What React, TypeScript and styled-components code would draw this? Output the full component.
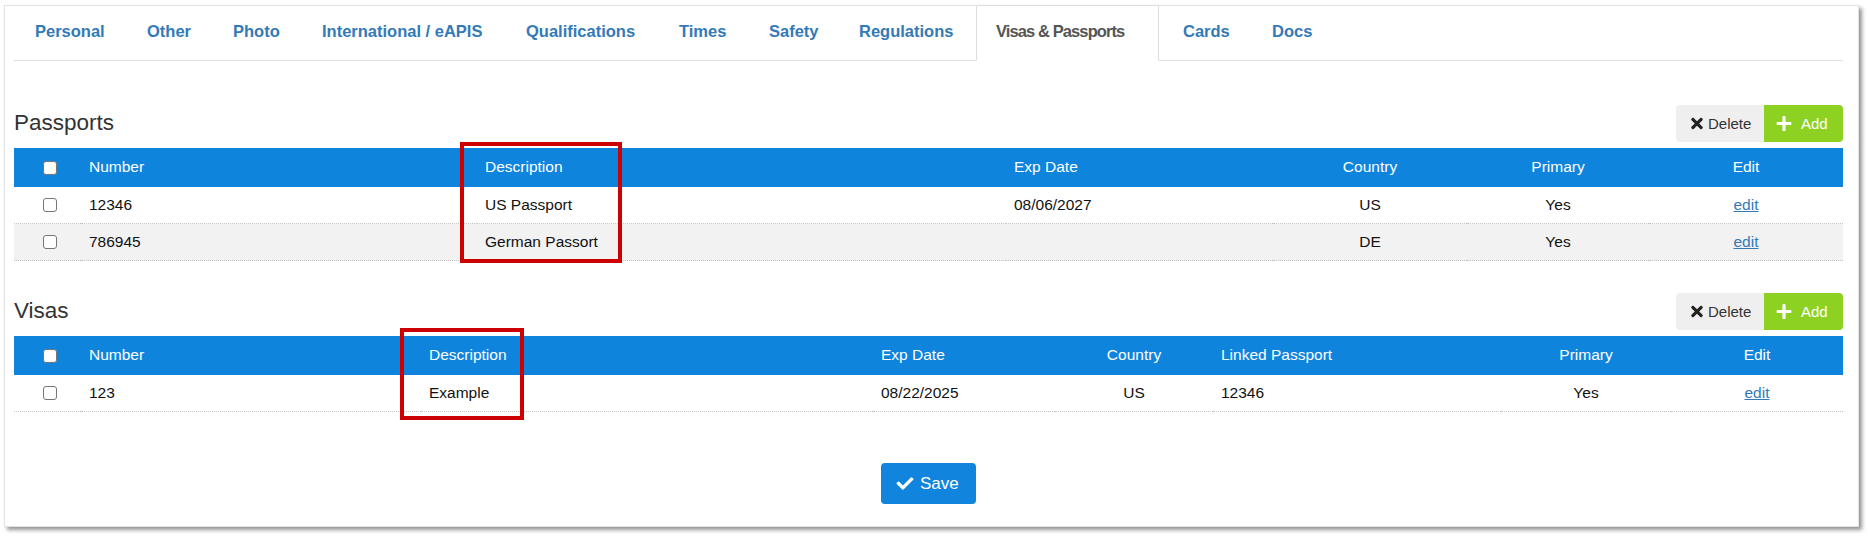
import React from 'react'
import styled, { createGlobalStyle } from 'styled-components'
import { FaTimes, FaPlus, FaCheck } from 'react-icons/fa'

const GlobalStyle = createGlobalStyle`
  html, body {
    margin: 0;
    padding: 0;
    background: #ffffff;
  }
  body {
    font-family: 'Liberation Sans', Arial, Helvetica, sans-serif;
    color: #111;
  }
`

interface Column {
  label: string
  width: number
  align?: 'left' | 'center'
}

interface TabItem {
  label: string
  width: number
  active?: boolean
}

const tabs: TabItem[] = [
  { label: 'Personal', width: 109 },
  { label: 'Other', width: 83 },
  { label: 'Photo', width: 86 },
  { label: 'International / eAPIS', width: 201 },
  { label: 'Qualifications', width: 150 },
  { label: 'Times', width: 87 },
  { label: 'Safety', width: 87 },
  { label: 'Regulations', width: 135 },
  { label: 'Visas & Passports', width: 183, active: true },
  { label: 'Cards', width: 86 },
  { label: 'Docs', width: 80 },
]

const passportColumns: Column[] = [
  { label: 'Number', width: 396 },
  { label: 'Description', width: 529 },
  { label: 'Exp Date', width: 267 },
  { label: 'Country', width: 194, align: 'center' },
  { label: 'Primary', width: 182, align: 'center' },
  { label: 'Edit', width: 194, align: 'center' },
]

const passportRows = [
  ['12346', 'US Passport', '08/06/2027', 'US', 'Yes'],
  ['786945', 'German Passort', '', 'DE', 'Yes'],
]

const visaColumns: Column[] = [
  { label: 'Number', width: 340 },
  { label: 'Description', width: 452 },
  { label: 'Exp Date', width: 182 },
  { label: 'Country', width: 158, align: 'center' },
  { label: 'Linked Passport', width: 288 },
  { label: 'Primary', width: 170, align: 'center' },
  { label: 'Edit', width: 172, align: 'center' },
]

const visaRows = [['123', 'Example', '08/22/2025', 'US', '12346', 'Yes']]

const Page = styled.div`
  position: relative;
  padding: 5px 0 9px 4px;
`

const Panel = styled.div`
  box-sizing: border-box;
  width: 1855px;
  height: 522px;
  background: #fff;
  border: 1px solid #e2e2e2;
  box-shadow: 3px 3px 4px rgba(0, 0, 0, 0.42);
  padding: 0 15px 0 9px;
`

const Tabs = styled.ul`
  display: flex;
  list-style: none;
  margin: -1px 0 0;
  padding: 0;
  border-bottom: 1px solid #dddddd;
`

const Tab = styled.li<{ $width: number; $active?: boolean }>`
  box-sizing: border-box;
  width: ${p => p.$width}px;
  height: 56px;
  margin-right: 3px;
  margin-bottom: -1px;
  padding: 0 0 3px 20px;
  display: flex;
  align-items: center;
  white-space: nowrap;
  font-size: 16.5px;
  font-weight: 700;
  color: ${p => (p.$active ? '#555555' : '#337ab7')};
  background: ${p => (p.$active ? '#ffffff' : 'transparent')};
  border: 1px solid ${p => (p.$active ? '#dddddd' : 'transparent')};
  border-bottom-color: ${p => (p.$active ? '#ffffff' : 'transparent')};
  border-radius: 2px 2px 0 0;
  ${p => p.$active && 'padding-left: 19px; letter-spacing: -0.9px;'}
`

const SectionHead = styled.div<{ $top: number }>`
  display: flex;
  align-items: center;
  justify-content: space-between;
  height: 37px;
  margin-top: ${p => p.$top}px;
  margin-bottom: 6px;
`

const Heading = styled.h2`
  margin: 0;
  font-size: 22.5px;
  font-weight: 400;
  color: #333;
  padding-bottom: 2px;
`

const ButtonGroup = styled.div`
  display: flex;
  height: 37px;
`

const ActionButton = styled.button<{ $variant: 'delete' | 'add' }>`
  display: flex;
  align-items: center;
  box-sizing: border-box;
  height: 37px;
  margin: 0;
  border: none;
  font-family: inherit;
  font-size: 15px;
  cursor: pointer;
  background: ${p => (p.$variant === 'delete' ? '#efefef' : '#8dd123')};
  color: ${p => (p.$variant === 'delete' ? '#333' : '#fff')};
  width: ${p => (p.$variant === 'delete' ? 88 : 79)}px;
  padding: ${p => (p.$variant === 'delete' ? '0 0 0 14px' : '0 0 0 12px')};
  gap: ${p => (p.$variant === 'delete' ? 4 : 9)}px;
  border-radius: ${p => (p.$variant === 'delete' ? '4px 0 0 4px' : '0 4px 4px 0')};

  svg {
    flex-shrink: 0;
    width: ${p => (p.$variant === 'delete' ? 14 : 16)}px;
    height: 17px;
    color: ${p => (p.$variant === 'delete' ? '#222' : '#fff')};
  }
`

const Table = styled.table`
  width: 100%;
  border-collapse: collapse;
  table-layout: fixed;
  font-size: 15.5px;
`

const HeadCell = styled.th<{ $align?: 'left' | 'center' }>`
  height: 38px;
  padding: 0 0 1px 8px;
  background: #0e84dd;
  color: #fff;
  font-weight: 400;
  text-align: ${p => p.$align || 'left'};
  ${p => p.$align === 'center' && 'padding-left: 0;'}
`

const Row = styled.tr<{ $striped?: boolean }>`
  background: ${p => (p.$striped ? '#f2f2f2' : '#ffffff')};
  border-bottom: 1px dotted #c4c4c4;
`

const Cell = styled.td<{ $align?: 'left' | 'center' }>`
  height: 36px;
  padding: 0 0 0 8px;
  color: #111;
  text-align: ${p => p.$align || 'left'};
  ${p => p.$align === 'center' && 'padding-left: 0;'}
`

const CheckCell = styled.td`
  padding: 0 0 0 29px;
  line-height: 0;
`

const CheckHead = styled.th`
  padding: 0 0 0 29px;
  background: #0e84dd;
  line-height: 0;
`

const Check = styled.input.attrs({ type: 'checkbox' })`
  appearance: none;
  display: block;
  width: 14px;
  height: 14px;
  margin: 0;
  border: 1px solid #767676;
  border-radius: 3px;
  background: #fff;
`

const EditLink = styled.a`
  color: #337ab7;
  text-decoration: underline;
  cursor: pointer;
`

const Footer = styled.div`
  display: flex;
  justify-content: center;
  margin-top: 51px;
`

const SaveButton = styled.button`
  display: flex;
  align-items: center;
  gap: 6px;
  box-sizing: border-box;
  width: 95px;
  height: 41px;
  padding: 0 0 0 15px;
  border: none;
  border-radius: 4px;
  background: #1184de;
  color: #fff;
  font-family: inherit;
  font-size: 17px;
  cursor: pointer;

  svg {
    width: 18px;
    height: 17px;
  }
`

const Highlight = styled.div<{ $x: number; $y: number; $w: number; $h: number }>`
  position: absolute;
  left: ${p => p.$x}px;
  top: ${p => p.$y}px;
  width: ${p => p.$w}px;
  height: ${p => p.$h}px;
  box-sizing: border-box;
  border: 4px solid #cc0000;
  pointer-events: none;
`

const Section: React.FC<{ title: string; top: number; columns: Column[]; rows: string[][] }> = ({
  title,
  top,
  columns,
  rows,
}) => (
  <>
    <SectionHead $top={top}>
      <Heading>{title}</Heading>
      <ButtonGroup>
        <ActionButton $variant="delete">
          <FaTimes /> Delete
        </ActionButton>
        <ActionButton $variant="add">
          <FaPlus /> Add
        </ActionButton>
      </ButtonGroup>
    </SectionHead>
    <Table>
      <colgroup>
        <col style={{ width: 67 }} />
        {columns.map(c => (
          <col key={c.label} style={{ width: c.width }} />
        ))}
      </colgroup>
      <thead>
        <tr>
          <CheckHead>
            <Check />
          </CheckHead>
          {columns.map(c => (
            <HeadCell key={c.label} $align={c.align}>
              {c.label}
            </HeadCell>
          ))}
        </tr>
      </thead>
      <tbody>
        {rows.map((row, i) => (
          <Row key={i} $striped={i % 2 === 1}>
            <CheckCell>
              <Check />
            </CheckCell>
            {row.map((value, j) => (
              <Cell key={j} $align={columns[j].align}>
                {value}
              </Cell>
            ))}
            <Cell $align="center">
              <EditLink>edit</EditLink>
            </Cell>
          </Row>
        ))}
      </tbody>
    </Table>
  </>
)

export default function App() {
  return (
    <>
      <GlobalStyle />
      <Page>
        <Panel>
          <Tabs>
            {tabs.map(t => (
              <Tab key={t.label} $width={t.width} $active={t.active}>
                {t.label}
              </Tab>
            ))}
          </Tabs>
          <Section title="Passports" top={44} columns={passportColumns} rows={passportRows} />
          <Section title="Visas" top={32} columns={visaColumns} rows={visaRows} />
          <Footer>
            <SaveButton>
              <FaCheck /> Save
            </SaveButton>
          </Footer>
        </Panel>
        <Highlight $x={460} $y={142} $w={162} $h={121} />
        <Highlight $x={400} $y={328} $w={124} $h={92} />
      </Page>
    </>
  )
}
